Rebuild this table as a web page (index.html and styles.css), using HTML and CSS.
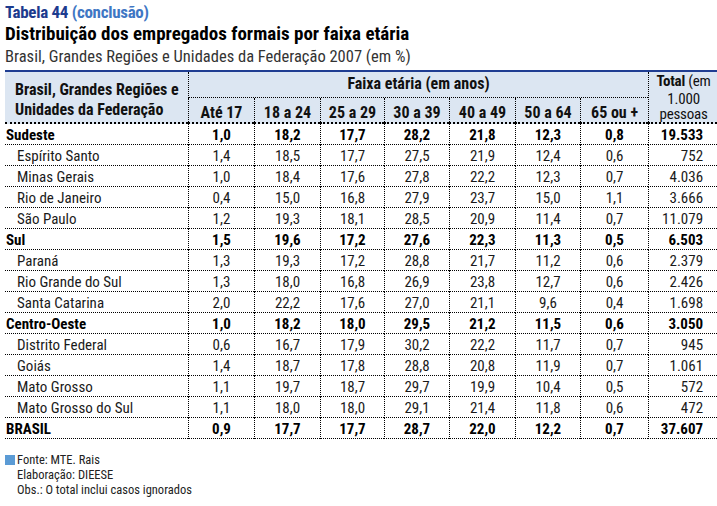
FILE: index.html
```html
<!DOCTYPE html>
<html lang="pt-BR">
<head>
<meta charset="utf-8">
<title>Tabela 44</title>
<link rel="stylesheet" href="styles.css">
</head>
<body>
<div class="page">
  <h1 class="kicker"><span class="num">Tabela 44</span> <span class="cont">(conclusão)</span></h1>
  <h2 class="title">Distribuição dos empregados formais por faixa etária</h2>
  <p class="subtitle">Brasil, Grandes Regiões e Unidades da Federação 2007 (em %)</p>
  <table class="data">
    <colgroup>
      <col class="c-label">
      <col class="c66"><col class="c66"><col class="c64"><col class="c65"><col class="c66"><col class="c65"><col class="c68">
      <col class="c-total">
    </colgroup>
    <thead>
      <tr class="hr1">
        <th rowspan="2" class="rowhead">Brasil, Grandes Regiões e<br>Unidades da Federação</th>
        <th colspan="7" class="group">Faixa etária (em anos)</th>
        <th rowspan="2" class="totalhead"><div class="t1"><b>Total</b> (em</div><div class="t2">1.000</div><div class="t2">pessoas</div></th>
      </tr>
      <tr class="hr2">
        <th>Até 17</th><th>18 a 24</th><th>25 a 29</th><th>30 a 39</th><th>40 a 49</th><th>50 a 64</th><th>65 ou +</th>
      </tr>
    </thead>
    <tbody>
      <tr class="region"><td>Sudeste</td><td>1,0</td><td>18,2</td><td>17,7</td><td>28,2</td><td>21,8</td><td>12,3</td><td>0,8</td><td>19.533</td></tr>
      <tr><td>Espírito Santo</td><td>1,4</td><td>18,5</td><td>17,7</td><td>27,5</td><td>21,9</td><td>12,4</td><td>0,6</td><td>752</td></tr>
      <tr><td>Minas Gerais</td><td>1,0</td><td>18,4</td><td>17,6</td><td>27,8</td><td>22,2</td><td>12,3</td><td>0,7</td><td>4.036</td></tr>
      <tr><td>Rio de Janeiro</td><td>0,4</td><td>15,0</td><td>16,8</td><td>27,9</td><td>23,7</td><td>15,0</td><td>1,1</td><td>3.666</td></tr>
      <tr><td>São Paulo</td><td>1,2</td><td>19,3</td><td>18,1</td><td>28,5</td><td>20,9</td><td>11,4</td><td>0,7</td><td>11.079</td></tr>
      <tr class="region"><td>Sul</td><td>1,5</td><td>19,6</td><td>17,2</td><td>27,6</td><td>22,3</td><td>11,3</td><td>0,5</td><td>6.503</td></tr>
      <tr><td>Paraná</td><td>1,3</td><td>19,3</td><td>17,2</td><td>28,8</td><td>21,7</td><td>11,2</td><td>0,6</td><td>2.379</td></tr>
      <tr><td>Rio Grande do Sul</td><td>1,3</td><td>18,0</td><td>16,8</td><td>26,9</td><td>23,8</td><td>12,7</td><td>0,6</td><td>2.426</td></tr>
      <tr><td>Santa Catarina</td><td>2,0</td><td>22,2</td><td>17,6</td><td>27,0</td><td>21,1</td><td>9,6</td><td>0,4</td><td>1.698</td></tr>
      <tr class="region"><td>Centro-Oeste</td><td>1,0</td><td>18,2</td><td>18,0</td><td>29,5</td><td>21,2</td><td>11,5</td><td>0,6</td><td>3.050</td></tr>
      <tr><td>Distrito Federal</td><td>0,6</td><td>16,7</td><td>17,9</td><td>30,2</td><td>22,2</td><td>11,7</td><td>0,7</td><td>945</td></tr>
      <tr><td>Goiás</td><td>1,4</td><td>18,7</td><td>17,8</td><td>28,8</td><td>20,8</td><td>11,9</td><td>0,7</td><td>1.061</td></tr>
      <tr><td>Mato Grosso</td><td>1,1</td><td>19,7</td><td>18,7</td><td>29,7</td><td>19,9</td><td>10,4</td><td>0,5</td><td>572</td></tr>
      <tr><td>Mato Grosso do Sul</td><td>1,1</td><td>18,0</td><td>18,0</td><td>29,1</td><td>21,4</td><td>11,8</td><td>0,6</td><td>472</td></tr>
      <tr class="region"><td>BRASIL</td><td>0,9</td><td>17,7</td><td>17,7</td><td>28,7</td><td>22,0</td><td>12,2</td><td>0,7</td><td>37.607</td></tr>
    </tbody>
  </table>
  <div class="notes">
    <p class="note first"><span class="mark"></span>Fonte: MTE. Rais</p>
    <p class="note">Elaboração: DIEESE</p>
    <p class="note">Obs.: O total inclui casos ignorados</p>
  </div>
</div>
</body>
</html>
```
FILE: styles.css
```css
html, body {
  margin: 0;
  padding: 0;
  background: #fff;
}
body {
  width: 717px;
  height: 506px;
  overflow: hidden;
  font-family: "Roboto", "Open Sans", "Liberation Sans", sans-serif;
  font-stretch: 75%;
  color: #1a1a1a;
}
.page {
  padding: 3px 0 0 5px;
}
.kicker {
  margin: 0;
  font-size: 17px;
  line-height: 18px;
  font-weight: bold;
  letter-spacing: -0.3px;
}
.kicker .num { color: #1d3b8e; }
.kicker .cont { color: #3f77c4; }
.title {
  margin: 3px 0 0;
  font-size: 19px;
  line-height: 20px;
  font-weight: bold;
  color: #000;
}
.subtitle {
  margin: 3px 0 0;
  font-size: 16.5px;
  line-height: 20px;
  color: #333;
}
.data {
  margin-top: 3px;
  width: 712px;
  table-layout: fixed;
  border-collapse: separate;
  border-spacing: 0;
  border-top: 2px solid #1f3d92;
}
.c-label { width: 183px; }
.c64 { width: 64px; }
.c65 { width: 65px; }
.c66 { width: 66px; }
.c68 { width: 68px; }
.c-total { width: 69px; }

.data th, .data td {
  box-sizing: border-box;
  padding: 0;
  white-space: nowrap;
}
.data thead th {
  background: #dce6f2;
  font-size: 16px;
  font-weight: bold;
  color: #111;
}
.hr1 th { height: 26px; }
.hr2 th {
  height: 26px;
  border-bottom: 2px dotted #000;
  border-left: 1px dotted #000;
  line-height: 18px;
  padding-top: 5px;
}
.rowhead {
  text-align: left;
  vertical-align: bottom;
  padding: 0 0 2px 10px !important;
  line-height: 20px;
  border-bottom: 2px dotted #000;
}
.group {
  vertical-align: top;
  border-left: 1px dotted #000;
  border-bottom: 1px dotted #000;
  line-height: 20px;
  padding-top: 2px !important;
}
.totalhead {
  border-left: 1px dotted #000;
  border-bottom: 2px dotted #000;
  vertical-align: top;
  font-size: 15px !important;
  font-weight: normal !important;
  letter-spacing: -0.2px;
  padding-left: 1px !important;
}
.totalhead .t1 { line-height: 18px; margin-bottom: 2px; }
.totalhead .t2 { line-height: 15px; }

.data td {
  height: 21px;
  padding-top: 1px;
  font-size: 15px;
  line-height: 18px;
  text-align: center;
  border-left: 1px dotted #000;
  border-bottom: 1px dotted #000;
}
.data td:first-child {
  text-align: left;
  border-left: 0;
  padding-left: 12px;
}
.data td:last-child {
  text-align: right;
  padding-right: 14px;
}
.data tr.region td { font-weight: bold; color: #000; }
.data tr.region td:first-child { padding-left: 1px; }

.notes {
  margin-top: 13px;
}
.note {
  margin: 0;
  padding-left: 12px;
  font-size: 12.5px;
  line-height: 15px;
  color: #222;
}
.note.first {
  display: flex;
  align-items: center;
  padding-left: 0;
}
.mark {
  width: 10px;
  height: 10px;
  background: #5b9bd5;
  margin-right: 2px;
}
```
